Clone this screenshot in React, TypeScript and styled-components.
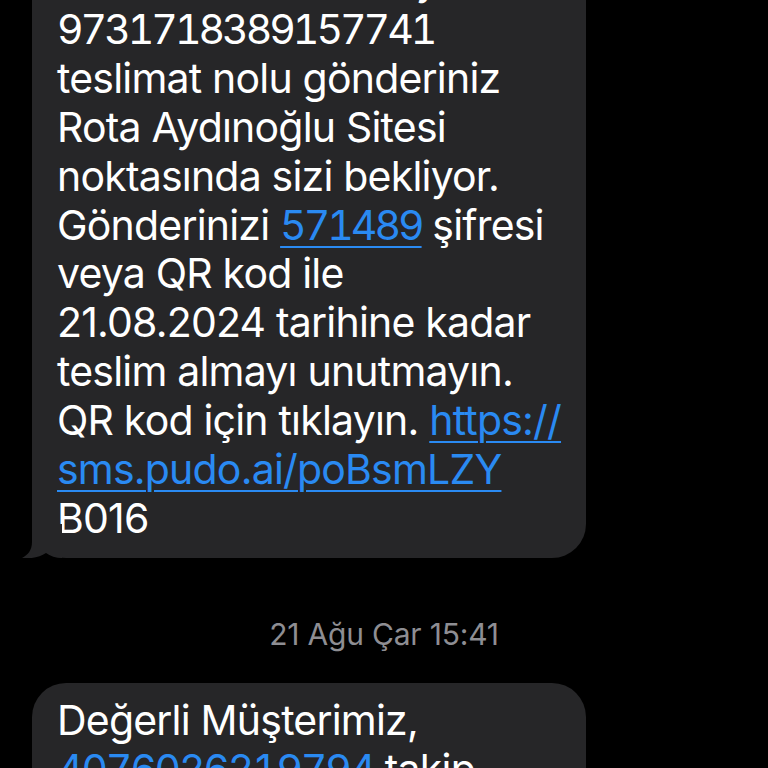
import React from "react";
import styled, { createGlobalStyle } from "styled-components";

const Global = createGlobalStyle`
  html, body {
    margin: 0;
    padding: 0;
    background: #000;
    overflow: hidden;
  }
  body {
    font-family: Inter, "Noto Sans", "Liberation Sans", sans-serif;
    -webkit-font-smoothing: antialiased;
  }
`;

const Thread = styled.div`
  width: 768px;
  height: 768px;
  overflow: hidden;
  display: flex;
  flex-direction: column;
  padding-left: 32px;
  box-sizing: border-box;
`;

const Bubble = styled.div<{ $offset?: number }>`
  position: relative;
  width: 554px;
  box-sizing: border-box;
  background: #262628;
  border-radius: 34px;
  padding: 13px 10px 15px 25px;
  margin-top: ${(p) => p.$offset ?? 0}px;
  color: #fff;
  font-size: 41px;
  line-height: 48.9px;
  letter-spacing: -0.8px;
  font-weight: 400;
  white-space: nowrap;
`;

const Num = styled.span<{ $tight?: number }>`
  font-variant-numeric: tabular-nums;
  letter-spacing: ${(p) => p.$tight ?? -3}px;
`;

const Tail = styled.svg`
  position: absolute;
  left: -10px;
  bottom: 0;
  width: 40px;
  height: 34px;
`;

const Link = styled.span`
  color: #2a8af2;
  text-decoration: underline;
  text-decoration-thickness: 2px;
  text-underline-offset: 6px;
`;

const Stamp = styled.div`
  margin: 58px 0 31px -32px;
  width: 768px;
  text-align: center;
  color: #8e8e93;
  font-size: 30px;
  line-height: 36px;
  letter-spacing: -0.2px;
`;

function BubbleTail() {
  return (
    <Tail viewBox="0 0 40 34">
      <path
        d="M10 0 L10 18 C10 26 6 31 0 34 C10 35 18 33 24 29 C28 32 34 34 40 34 L40 0 Z"
        fill="#262628"
      />
    </Tail>
  );
}

export default function App() {
  return (
    <>
      <Global />
      <Thread>
        <Bubble $offset={-57}>
          Merhaba Ahmet Bey
          <br />
          <Num>9731718389157741</Num>
          <br />
          teslimat nolu gönderiniz
          <br />
          Rota Aydınoğlu Sitesi
          <br />
          noktasında sizi bekliyor.
          <br />
          Gönderinizi{" "}
          <Link>
            <Num>571489</Num>
          </Link>{" "}
          şifresi
          <br />
          veya QR kod ile
          <br />
          21.08.2024 tarihine kadar
          <br />
          teslim almayı unutmayın.
          <br />
          QR kod için tıklayın. <Link>https://</Link>
          <br />
          <Link>sms.pudo.ai/poBsmLZY</Link>
          <br />
          B016
          <BubbleTail />
        </Bubble>
        <Stamp>21 Ağu Çar 15:41</Stamp>
        <Bubble>
          Değerli Müşterimiz,
          <br />
          <Link>
            <Num $tight={-2.2}>4076026219794</Num>
          </Link>{" "}
          takip
          <br />
          nolu gönderiniz
        </Bubble>
      </Thread>
    </>
  );
}
